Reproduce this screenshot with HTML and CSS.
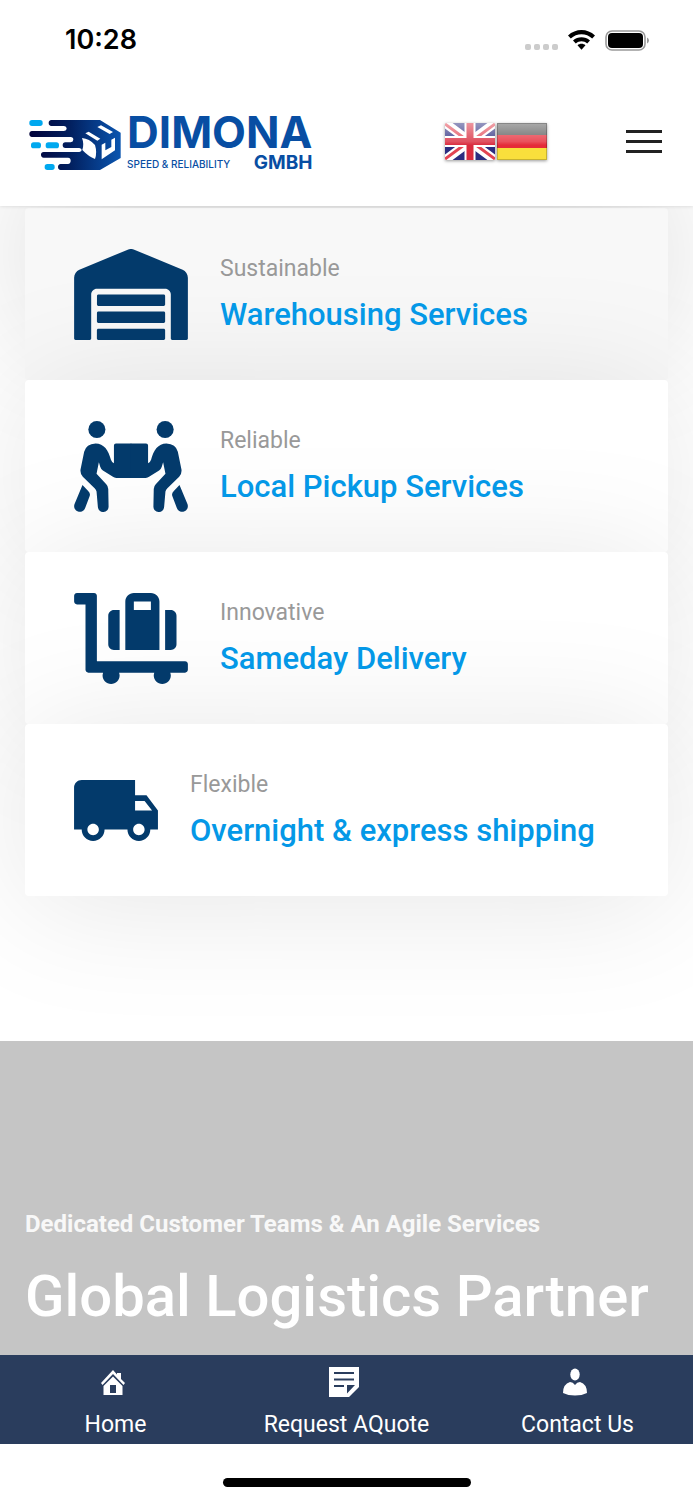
FILE: index.html
```html
<!DOCTYPE html>
<html lang="en">
<head>
<meta charset="utf-8">
<meta name="viewport" content="width=device-width, initial-scale=1">
<title>Dimona GmbH</title>
<link rel="stylesheet" href="styles.css">
</head>
<body>
<div class="status">
  <time class="clock">10:28</time>
  <div class="status-icons">
    <span class="signal"><i></i><i></i><i></i><i></i></span>
    <svg class="wifi" viewBox="0 0 27 21" aria-hidden="true"><path d="M0 5.6C7.5-1.8 19.5-1.8 27 5.6L24.2 8.5C18.2 2.8 8.800 2.8 2.800 8.500ZM5 10.600C9.800 6.200 17.200 6.200 22 10.600L19.200 13.500C16 10.500 11 10.500 7.800 13.500ZM9.500 15.300C11.800 13.300 15.200 13.300 17.500 15.300L13.500 19.800Z"/></svg>
    <svg class="battery" viewBox="0 0 44 21" aria-hidden="true"><rect x="1" y="1" width="39" height="19" rx="6" fill="none" stroke="#999" stroke-width="1.600"/><rect x="3" y="3" width="35" height="15" rx="4"/><path d="M42 7.500q2 1 2 3t-2 3z" fill="#999"/></svg>
  </div>
</div>
<header class="header">
  <a class="logo" href="#" aria-label="Dimona GmbH">
    <svg class="mark" viewBox="0 0 274 150" aria-hidden="true">
      <defs><linearGradient id="g" x1="0" x2="1"><stop offset="0" stop-color="#02023a"/><stop offset=".45" stop-color="#02205f"/><stop offset="1" stop-color="#0a55b0"/></linearGradient></defs>
      <path fill="url(#g)" d="M66 0H212L274 38V114L212 150H94Q86 149 86 141T94 132H116Q124 131 124 122T116 113H43Q35 112 35 104T43 96H150Q157 95 157 90T150 84H108Q100 83 100 75.500T108 67H124Q132 66 132 58.500T124 51H8Q0 50 0 42T8 33H104Q112 32 112 25.500T104 18H66Q58 17 58 9T66 0Z"/>
      <path fill="#fff" d="M168 40L178 35 213 56 204 62ZM204 21L215 16 251 36 241 42ZM158 54Q180 56 197 75Q204 98 197 117Q178 110 159 90Q165 72 158 54ZM217 74L228 68V91L246 81V59L257 53V91L217 118Z"/>
      <g fill="#00a8ef"><rect y="0" width="40" height="18" rx="8"/><rect x="5" y="67" width="30" height="18" rx="8"/><rect x="49" y="67" width="40" height="18" rx="8"/><rect x="46" y="132" width="30" height="18" rx="8"/></g>
    </svg>
    <span class="wordmark">
      <span class="brand">DIMONA</span>
      <span class="tag">SPEED &amp; RELIABILITY</span>
      <span class="gmbh">GMBH</span>
    </span>
  </a>
  <div class="langs">
    <a href="#" class="lang" aria-label="English"><svg viewBox="0 0 50 37" preserveAspectRatio="none">
      <defs><linearGradient id="s" x1="0" x2="0" y1="0" y2="1"><stop offset="0" stop-color="#fff" stop-opacity=".5"/><stop offset=".5" stop-color="#fff" stop-opacity=".18"/><stop offset=".6" stop-color="#fff" stop-opacity="0"/></linearGradient></defs>
      <rect width="50" height="37" fill="#2b2d80"/><path d="M0 0L50 37M50 0L0 37" stroke="#fff" stroke-width="9"/><path d="M0 1L19 15M50 1L31 15M0 36L19 22M50 36L31 22" stroke="#e24452" stroke-width="3"/><path d="M25 0V37M0 18.500H50" stroke="#fff" stroke-width="11"/><path d="M25 0V37M0 18.500H50" stroke="#d92b3e" stroke-width="7"/><rect width="50" height="37" fill="url(#s)"/></svg></a>
    <a href="#" class="lang" aria-label="Deutsch"><svg viewBox="0 0 50 37" preserveAspectRatio="none"><rect width="50" height="37" fill="#f9df3c"/><rect width="50" height="25" fill="#e52b38"/><rect width="50" height="12" fill="#555"/><rect width="50" height="37" fill="url(#s)"/><rect x=".5" y=".5" width="49" height="36" fill="none" stroke="#000" stroke-opacity=".2"/></svg></a>
  </div>
  <button class="menu" aria-label="Menu"><i></i><i></i><i></i></button>
</header>
<main>
  <section class="services">
    <a class="card first" href="#">
      <svg class="icon" viewBox="0 0 640 512" aria-hidden="true"><path d="M504 352H136.400c-4.400 0-8 3.600-8 8l-.1 48c0 4.400 3.600 8 8 8H504c4.400 0 8-3.600 8-8v-48c0-4.400-3.600-8-8-8zm0 96H136.100c-4.400 0-8 3.600-8 8l-.1 48c0 4.400 3.600 8 8 8h368c4.400 0 8-3.600 8-8v-48c0-4.400-3.600-8-8-8zm0-192H136.600c-4.400 0-8 3.600-8 8l-.1 48c0 4.400 3.600 8 8 8H504c4.400 0 8-3.600 8-8v-48c0-4.400-3.600-8-8-8zm106.500-139L338.400 3.700a48.150 48.150 0 0 0-36.900 0L29.500 117C11.700 124.500 0 141.900 0 161.300V504c0 4.400 3.600 8 8 8h80c4.400 0 8-3.600 8-8V256c0-17.600 14.600-32 32.600-32h382.800c18 0 32.600 14.400 32.600 32v248c0 4.400 3.600 8 8 8h80c4.400 0 8-3.600 8-8V161.300c0-19.400-11.700-36.800-29.500-44.300z"/></svg>
      <span class="copy"><span class="kicker">Sustainable</span><span class="title">Warehousing Services</span></span>
    </a>
    <a class="card" href="#">
      <svg class="icon" viewBox="0 0 340 272" aria-hidden="true">
        <g id="carrier"><circle cx="68" cy="25.500" r="25.500"/><path d="M64 67C89 67 103 87 110 116Q112 123 119 126V73Q119 67 125 67H171V170H126Q120 170 116 167L86 148Q80 144 78 137L74 123L67 158L96 189Q102 195 102 203L103 255A16 16 0 0 1 71 257L67 211Q66 206 62 202L26 167Q18 159 19 146L30 92Q36 68 64 67ZM25 191L42 209Q50 216 46 226L33 260A16.500 16.500 0 0 1 1 249Z"/></g>
        <use href="#carrier" transform="translate(340 0) scale(-1 1)"/>
      </svg>
      <span class="copy"><span class="kicker">Reliable</span><span class="title">Local Pickup Services</span></span>
    </a>
    <a class="card" href="#">
      <svg class="icon" viewBox="0 0 640 512" aria-hidden="true"><path d="M224 320h32V96h-32c-17.670 0-32 14.330-32 32v160c0 17.670 14.330 32 32 32zm352-32V128c0-17.670-14.330-32-32-32h-32v224h32c17.670 0 32-14.330 32-32zm48 96H128V16c0-8.840-7.160-16-16-16H16C7.160 0 0 7.160 0 16v32c0 8.840 7.160 16 16 16h48v368c0 8.840 7.160 16 16 16h82.940c-1.790 5.030-2.940 10.360-2.940 16 0 26.510 21.490 48 48 48s48-21.490 48-48c0-5.640-1.150-10.970-2.940-16h197.880c-1.790 5.030-2.940 10.360-2.940 16 0 26.510 21.490 48 48 48s48-21.490 48-48c0-5.640-1.150-10.970-2.940-16H624c8.840 0 16-7.160 16-16v-32c0-8.840-7.160-16-16-16zM480 96V48c0-26.510-21.490-48-48-48h-96c-26.510 0-48 21.490-48 48v272h192V96zm-48 0h-96V48h96v48z"/></svg>
      <span class="copy"><span class="kicker">Innovative</span><span class="title">Sameday Delivery</span></span>
    </a>
    <a class="card" href="#">
      <svg class="icon truck" viewBox="1 4 22 16" aria-hidden="true"><path d="M20 8h-3V4H3c-1.100 0-2 .9-2 2v11h2c0 1.660 1.340 3 3 3s3-1.340 3-3h6c0 1.660 1.340 3 3 3s3-1.340 3-3h2v-5l-3-4zM6 18.500c-.83 0-1.500-.67-1.500-1.500s.67-1.500 1.500-1.500 1.500.67 1.500 1.500-.67 1.500-1.500 1.500zm13.500-9l1.960 2.500H17V9.500h2.500zm-1.500 9c-.83 0-1.500-.67-1.500-1.500s.67-1.500 1.500-1.500 1.500.67 1.500 1.500-.67 1.500-1.500 1.500z"/></svg>
      <span class="copy"><span class="kicker">Flexible</span><span class="title">Overnight &amp; express shipping</span></span>
    </a>
  </section>
  <section class="hero">
    <p class="lead">Dedicated Customer Teams &amp; An Agile Services</p>
    <h1 class="headline">Global Logistics Partner</h1>
  </section>
</main>
<nav class="tabs">
  <a href="#" class="tab"><svg viewBox="0 0 30 30" aria-hidden="true"><path d="M3 16L15 3 19 7.500V6H23V12L27 16 25.500 18 15 7 4.500 18ZM5.500 19L15 9.500 24.500 19V28H5.500ZM12 18V26H18V18Z" fill-rule="evenodd"/></svg><span>Home</span></a>
  <a href="#" class="tab"><svg viewBox="0 0 30 30" aria-hidden="true"><path d="M0 0H30V20L20 30H0ZM5 5V7H25V5ZM5 11.500V13.500H25V11.500ZM5 18V20H15V18ZM18 18V26.500L26 18Z" fill-rule="evenodd"/></svg><span>Request AQuote</span></a>
  <a href="#" class="tab"><svg viewBox="0 0 30 30" aria-hidden="true"><ellipse cx="15" cy="7.500" rx="4.700" ry="6"/><path d="M10 15Q13 15 15 18Q17 15 20 15Q27 17 27 26Q22 28.500 15 28.500T3 26Q3 17 10 15Z"/></svg><span>Contact Us</span></a>
</nav>
<footer class="home-area"><span class="home-bar"></span></footer>
</body>
</html>
```
FILE: styles.css
```css
* { box-sizing: border-box; }
body { margin: 0; background: #fff; font-family: Roboto, sans-serif; color: #222; }
a { color: inherit; text-decoration: none; }
svg { display: block; }

.status { position: relative; z-index: 2; display: flex; justify-content: space-between; align-items: center; height: 80px; padding: 0 44px 0 65px; background: #fff; color: #000; }
.clock { font: 600 27px/32px Inter, sans-serif; }
.status-icons { display: flex; align-items: center; gap: 10px; }
.signal { display: flex; gap: 3px; padding-top: 13px; }
.signal i { width: 6px; height: 6px; border-radius: 2px; background: #ccc; }
.wifi { width: 27px; height: 21px; }
.battery { width: 44px; height: 21px; }

.header { position: relative; z-index: 1; display: flex; align-items: center; height: 126px; padding: 0 31px 4px 29px; background: #fff; box-shadow: 0 0 4px rgba(0, 0, 0, .14); }
.logo { display: flex; align-items: flex-end; gap: 6px; color: #084ea3; }
.mark { width: 92px; height: 50px; margin-bottom: 2px; }
.wordmark { display: grid; grid-template-columns: auto auto; width: 182px; justify-content: space-between; align-items: start; }
.brand { grid-column: 1 / 3; margin-bottom: 3px; font: 700 44px/42px Inter, sans-serif; }
.tag { font: 500 10px/16px Inter, sans-serif; }
.gmbh { justify-self: end; font: 700 19px/14px Inter, sans-serif; }
.langs { display: flex; gap: 2px; margin-left: auto; }
.lang svg { width: 50px; height: 37px; box-shadow: 0 1px 3px rgba(0, 0, 0, .4); }
.menu { display: flex; flex-direction: column; gap: 7px; margin-left: 79px; padding: 0; border: 0; background: none; }
.menu i { width: 36px; height: 3px; background: #222; }

.services { padding: 2px 25px 145px; overflow: hidden; }
.card { display: flex; align-items: center; gap: 32px; height: 172px; padding: 2px 49px 0; border-radius: 4px; background: #fff; box-shadow: 0 8px 130px rgba(0, 0, 0, .1); }
.first { background: #f8f8f8; box-shadow: 0 -40px 130px rgba(0, 0, 0, .14); }
.icon { flex: none; width: 114px; height: 91px; margin-bottom: 2px; fill: #033a6b; }
.truck { width: 84px; height: 61px; }
.copy { display: flex; flex-direction: column; gap: 12px; }
.kicker { font-size: 23px; line-height: 28px; color: #999; }
.title { font-size: 31px; line-height: 40px; font-weight: 500; color: #0498e7; }

.hero { position: relative; min-height: 314px; padding: 167px 25px 20px; background: #c5c5c5; color: #fff; }
.lead { margin: 0 0 22px; font-size: 24px; line-height: 32px; font-weight: 700; color: #f8f8f8; }
.headline { margin: 0; font-size: 58px; line-height: 68px; font-weight: 500; white-space: nowrap; }

.tabs { display: flex; height: 89px; background: #2a3d5d; color: #fff; }
.tab { flex: 1; display: flex; flex-direction: column; align-items: center; gap: 14px; padding-top: 12px; font-size: 23px; line-height: 28px; }
.tab svg { width: 30px; height: 30px; margin-right: 6px; fill: #fff; }
.home-area { display: flex; justify-content: center; height: 56px; padding-top: 34px; }
.home-bar { width: 248px; height: 9px; border-radius: 5px; background: #000; }
```
